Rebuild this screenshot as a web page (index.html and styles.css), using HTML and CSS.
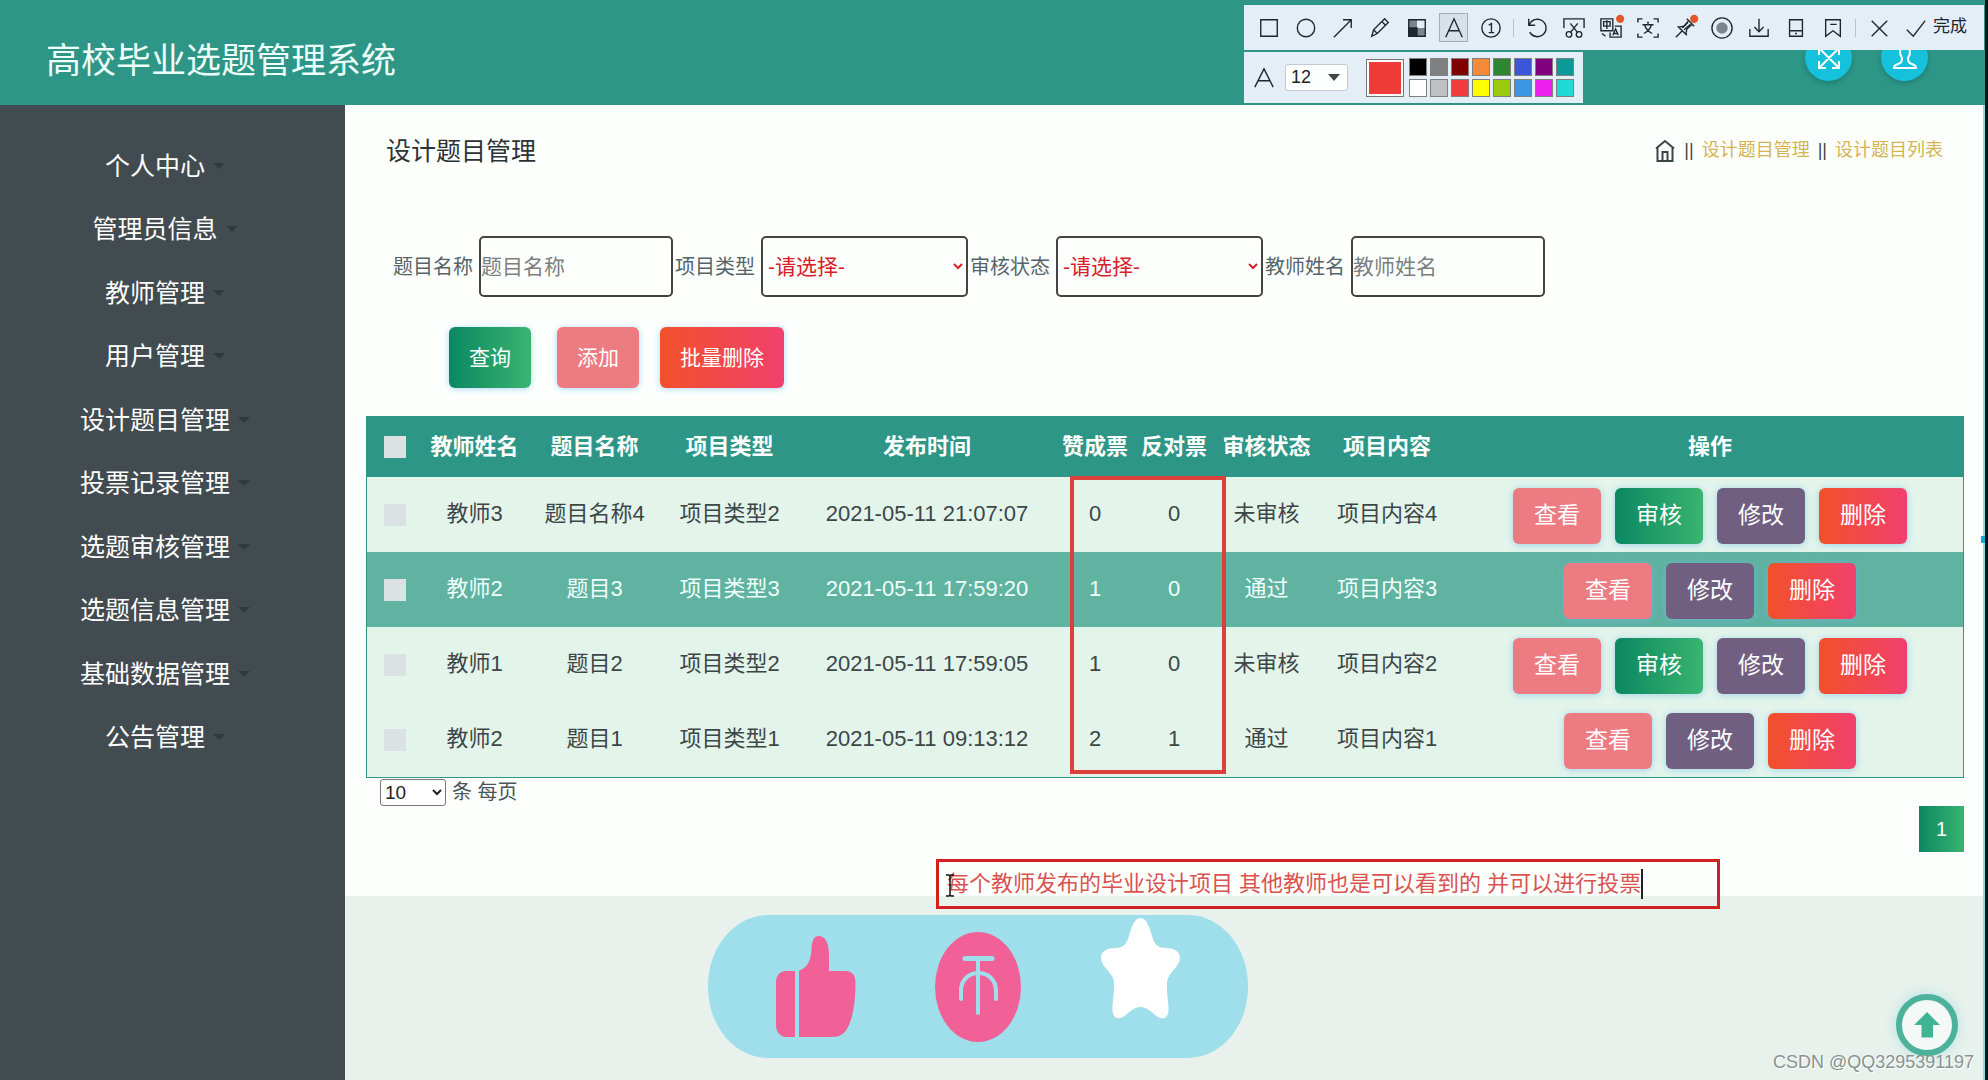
FILE: index.html
```html
<!DOCTYPE html>
<html lang="zh-CN">
<head>
<meta charset="utf-8">
<title>高校毕业选题管理系统</title>
<link rel="stylesheet" href="styles.css">
</head>
<body>
<header class="topbar">
  <h1 class="brand">高校毕业选题管理系统</h1>
  <div class="top-actions">
    <button class="round-btn" type="button" aria-label="全屏">
      <svg width="26" height="26" viewBox="0 0 26 26" fill="none" stroke="#fff" stroke-width="2"><path d="M4 4l18 18M22 4L4 22M3 10V3h7M16 3h7v7M23 16v7h-7M10 23H3v-7"/></svg>
    </button>
    <button class="round-btn" type="button" aria-label="用户">
      <svg width="26" height="26" viewBox="0 0 26 26" fill="none" stroke="#fff" stroke-width="2"><path d="M10 13C7 9 7 2 13 2s6 7 3 11c0 4 1 5 4 6 3 1 4 2 4 4H2c0-2 1-3 4-4 3-1 4-2 4-6z"/></svg>
    </button>
  </div>
</header>

<div class="layout">
  <nav class="sidebar">
    <ul class="menu">
      <li><a href="#">个人中心</a></li>
      <li><a href="#">管理员信息</a></li>
      <li><a href="#">教师管理</a></li>
      <li><a href="#">用户管理</a></li>
      <li><a href="#">设计题目管理</a></li>
      <li><a href="#">投票记录管理</a></li>
      <li><a href="#">选题审核管理</a></li>
      <li><a href="#">选题信息管理</a></li>
      <li><a href="#">基础数据管理</a></li>
      <li><a href="#">公告管理</a></li>
    </ul>
  </nav>

  <main class="main">
    <section class="panel">
      <div class="panel-head">
        <h2 class="page-title">设计题目管理</h2>
        <div class="crumbs">
          <svg width="22" height="24" viewBox="0 0 22 24" fill="none" stroke="#3a4548" stroke-width="2"><path d="M2 9.500L11 2l9 7.500M3.500 9v13h15V9M8.500 22v-9h5v9"/></svg>
          <span>||</span><a href="#">设计题目管理</a><span>||</span><a href="#">设计题目列表</a>
        </div>
      </div>

      <form class="search">
        <label for="topic">题目名称</label>
        <input id="topic" type="text" placeholder="题目名称">
        <label for="kind">项目类型</label>
        <select id="kind"><option>-请选择-</option></select>
        <label for="state">审核状态</label>
        <select id="state"><option>-请选择-</option></select>
        <label for="teacher">教师姓名</label>
        <input id="teacher" type="text" placeholder="教师姓名">
      </form>

      <div class="actions">
        <button class="btn green" type="button">查询</button>
        <button class="btn pink" type="button">添加</button>
        <button class="btn red" type="button">批量删除</button>
      </div>

      <table class="grid">
        <colgroup>
          <col class="c-check"><col class="c-teacher"><col class="c-topic"><col class="c-kind"><col class="c-time"><col class="c-yes"><col class="c-no"><col class="c-state"><col class="c-content"><col>
        </colgroup>
        <thead>
          <tr><th><input type="checkbox" aria-label="全选"></th><th>教师姓名</th><th>题目名称</th><th>项目类型</th><th>发布时间</th><th>赞成票</th><th>反对票</th><th>审核状态</th><th>项目内容</th><th>操作</th></tr>
        </thead>
        <tbody>
          <tr><td><input type="checkbox" aria-label="选择"></td><td>教师3</td><td>题目名称4</td><td>项目类型2</td><td>2021-05-11 21:07:07</td><td>0</td><td>0</td><td>未审核</td><td>项目内容4</td>
            <td><div class="ops"><button class="op pink" type="button">查看</button><button class="op green" type="button">审核</button><button class="op purple" type="button">修改</button><button class="op red" type="button">删除</button></div></td></tr>
          <tr class="active"><td><input type="checkbox" aria-label="选择"></td><td>教师2</td><td>题目3</td><td>项目类型3</td><td>2021-05-11 17:59:20</td><td>1</td><td>0</td><td>通过</td><td>项目内容3</td>
            <td><div class="ops"><button class="op pink" type="button">查看</button><button class="op purple" type="button">修改</button><button class="op red" type="button">删除</button></div></td></tr>
          <tr><td><input type="checkbox" aria-label="选择"></td><td>教师1</td><td>题目2</td><td>项目类型2</td><td>2021-05-11 17:59:05</td><td>1</td><td>0</td><td>未审核</td><td>项目内容2</td>
            <td><div class="ops"><button class="op pink" type="button">查看</button><button class="op green" type="button">审核</button><button class="op purple" type="button">修改</button><button class="op red" type="button">删除</button></div></td></tr>
          <tr><td><input type="checkbox" aria-label="选择"></td><td>教师2</td><td>题目1</td><td>项目类型1</td><td>2021-05-11 09:13:12</td><td>2</td><td>1</td><td>通过</td><td>项目内容1</td>
            <td><div class="ops"><button class="op pink" type="button">查看</button><button class="op purple" type="button">修改</button><button class="op red" type="button">删除</button></div></td></tr>
        </tbody>
      </table>

      <div class="page-size">
        <select id="size"><option>10</option></select>
        <label for="size">条 每页</label>
      </div>
      <div class="pager"><button class="page green" type="button">1</button></div>
    </section>

    <section class="feedback">
      <svg width="540" height="143" viewBox="0 0 540 143" role="img" aria-label="点赞 投币 收藏">
        <rect width="540" height="143" rx="60" ry="71" fill="#9fdfec"/>
        <g fill="#f16198">
          <path d="M87 56v66H77c-6-1-9-6-9-12V67c0-6 3-10 9-11z"/>
          <path d="M91 56c9-4 12-11 12.500-22C104 25 106 21 111 21c6 0 10 7 10 19v16h17c6 0 9.500 4 9.500 11 0 20-2.500 34-6.500 43-4 9-9 12-17 12H91z"/>
          <ellipse cx="270" cy="72" rx="43" ry="55"/>
        </g>
        <g fill="none" stroke="#9fdfec" stroke-width="4" stroke-linecap="round">
          <path d="M257 43.500h27" stroke-width="5"/>
          <path d="M270 44v54M253 84v-8c0-24 35-24 35 0v8"/>
        </g>
        <path fill="#fff" d="M432.500 3c6 0 9 9 11.500 18 2 8 6 12 13 12 9 0 15 3 15 10s-8 12-12 20c-3 8 1 24 .5 33-1 8-6 9-12 5-6-5-10-9-16-9s-10 4-16 9c-6 4-11 3-12-5-.5-9 3.500-25 .5-33-4-8-12-13-12-20s6-10 15-10c7 0 11-4 13-12 2.500-9 5.500-18 11.500-18z"/>
      </svg>
    </section>

    <div class="mark-votes"></div>
    <div class="mark-note">
      <span class="note-text">每个教师发布的毕业设计项目 其他教师也是可以看到的 并可以进行投票</span>
      <svg class="ibeam" width="10" height="23" viewBox="0 0 10 23" fill="none" stroke="#111" stroke-width="1.500"><path d="M1 1h3l1 1 1-1h3M5 2v19M1 22h3l1-1 1 1h3"/></svg>
    </div>
    <button class="to-top" type="button" aria-label="返回顶部">
      <svg width="28" height="28" viewBox="0 0 28 28" fill="#3fb495"><path d="M14 1l13 13h-7v12.500H8.500V14H1z"/></svg>
    </button>
    <div class="watermark">CSDN @QQ3295391197</div>
    <div class="edge-handle"></div>
  </main>
</div>

<div class="capture">
  <div class="tools">
    <button type="button" aria-label="矩形"><svg viewBox="0 0 24 24"><path d="M3 3h18v18H3z"/></svg></button>
    <button type="button" aria-label="椭圆"><svg viewBox="0 0 24 24"><circle cx="12" cy="12" r="9.500"/></svg></button>
    <button type="button" aria-label="箭头"><svg viewBox="0 0 24 24"><path d="M2 22L21 3M12 3h9v9"/></svg></button>
    <button type="button" aria-label="画笔"><svg viewBox="0 0 24 24"><path d="M3 21l2-7L17 2l4 4L9 18zM14 5l4 4M5 14l4 4"/></svg></button>
    <button type="button" aria-label="马赛克"><svg viewBox="0 0 24 24"><path d="M3 3h9v9H3zM12 12h9v9h-9z" fill="#7d858c" stroke="none"/><path d="M3 12h9v9H3z" fill="#1e2730"/><path d="M3 3h18v18H3z"/></svg></button>
    <button class="on" type="button" aria-label="文字"><svg viewBox="0 0 24 24"><path d="M3 22L12 2l9 20M6 15h12"/></svg></button>
    <button type="button" aria-label="序号"><svg viewBox="0 0 24 24"><circle cx="12" cy="12" r="10"/><path d="M9.500 9l3-2v10M9.500 17h6"/></svg></button>
    <i class="sep"></i>
    <button type="button" aria-label="撤销"><svg viewBox="0 0 24 24"><path d="M3 2v7h7M3.500 8.500A9.500 9.500 0 1 1 4 16.500"/></svg></button>
    <button type="button" aria-label="裁剪"><svg viewBox="0 0 24 24"><path d="M1 12V2h22v10M8 7l8 10M16 7L8 17"/><circle cx="6.500" cy="19" r="3"/><circle cx="17.500" cy="19" r="3"/></svg></button>
    <button type="button" aria-label="翻译"><svg viewBox="0 0 24 24"><path d="M1 2h13v13H1zM4 5h7v5H4zM7.500 3.500V13M16 10h7v12H11v-5M14 20l3-7 3 7M15 18h4M2 18l4 3"/><circle cx="22" cy="2" r="4.500" class="dot"/></svg></button>
    <button type="button" aria-label="识别文字"><svg viewBox="0 0 24 24"><path d="M1 6V2h5M18 2h5v4M23 18v4h-5M6 22H1v-4M12 5v3M6 8.500h12M8.500 9c1 4 4 7 8 9M15.500 9c-1 4-4 7-8 9"/></svg></button>
    <button type="button" aria-label="钉住"><svg viewBox="0 0 24 24"><path d="M2 22l7-7M4 10l10 10M5 11l6-1 5-6M13 19l1-6 6-5M14 2l8 8"/><path d="M9 12l6-6M11 14l7-6" /><circle cx="22" cy="2" r="4.500" class="dot"/></svg></button>
    <button type="button" aria-label="录制"><svg viewBox="0 0 24 24"><circle cx="12" cy="12" r="11"/><circle cx="12" cy="12" r="5.500" fill="#7d858c" stroke="#7d858c"/></svg></button>
    <button type="button" aria-label="下载"><svg viewBox="0 0 24 24"><path d="M12 2v14M7 11l5 5 5-5M2 13v8h20v-8"/></svg></button>
    <button type="button" aria-label="发送到手机"><svg viewBox="0 0 24 24"><path d="M5 3h14v18H5zM5 15h14M11 18h2"/></svg></button>
    <button type="button" aria-label="收藏"><svg viewBox="0 0 24 24"><path d="M4 3h16v18l-8-6-8 6zM9 8h7"/></svg></button>
    <i class="sep"></i>
    <button type="button" aria-label="关闭"><svg viewBox="0 0 24 24"><path d="M4 4l17 17M21 4L4 21"/></svg></button>
    <button class="done" type="button"><svg viewBox="0 0 24 24"><path d="M2 14l7 7L22 4"/></svg>完成</button>
  </div>
  <div class="options">
    <svg viewBox="0 0 24 24"><path d="M2 22L12 2l10 20M6 15h12"/></svg>
    <span class="font-size"><select aria-label="字号"><option>12</option></select><svg viewBox="0 0 12 8"><path d="M0 0h12L6 7z"/></svg></span>
    <button class="current" type="button" aria-label="当前颜色"></button>
    <div class="palette">
      <button class="k1" type="button" aria-label="黑"></button><button class="k2" type="button" aria-label="灰"></button><button class="k3" type="button" aria-label="深红"></button><button class="k4" type="button" aria-label="橙"></button><button class="k5" type="button" aria-label="绿"></button><button class="k6" type="button" aria-label="蓝"></button><button class="k7" type="button" aria-label="紫"></button><button class="k8" type="button" aria-label="青"></button>
      <button class="k9" type="button" aria-label="白"></button><button class="k10" type="button" aria-label="浅灰"></button><button class="k11" type="button" aria-label="红"></button><button class="k12" type="button" aria-label="黄"></button><button class="k13" type="button" aria-label="黄绿"></button><button class="k14" type="button" aria-label="天蓝"></button><button class="k15" type="button" aria-label="洋红"></button><button class="k16" type="button" aria-label="浅青"></button>
    </div>
  </div>
</div>
</body>
</html>
```
FILE: styles.css
```css
* { box-sizing: border-box; }

body {
  margin: 0;
  min-height: 100vh;
  display: flex;
  flex-direction: column;
  position: relative;
  border-right: 3px solid #04121c;
  background: #e8f1ec;
  color: #4a5559;
  font-family: "Liberation Sans", "Noto Sans CJK SC", sans-serif;
  font-size: 20px;
  line-height: 1.2;
}

button, input, select { font-family: inherit; line-height: 1.2; margin: 0; }
button { border: 0; padding: 0; cursor: pointer; }
h1, h2, ul { margin: 0; padding: 0; font-weight: 400; }
a { text-decoration: none; }

/* header */
.topbar {
  height: 105px;
  padding: 0 57px 0 46px;
  display: flex;
  align-items: center;
  justify-content: space-between;
  background: #2d9686;
}
.brand { font-size: 35px; line-height: 50px; padding-top: 16px; color: #eefffb; }
.top-actions { display: flex; gap: 29px; padding-top: 10px; }
.round-btn {
  width: 47px;
  height: 47px;
  border-radius: 50%;
  display: grid;
  place-items: center;
  background: #16c1dc;
  box-shadow: 0 2px 5px rgba(0, 60, 60, .3);
}

/* sidebar */
.layout { flex: 1; display: flex; }
.sidebar { width: 345px; flex: none; background: #424b4f; padding: 29px 15px 0 0; }
.menu { list-style: none; display: grid; grid-auto-rows: 1fr; height: 635px; }
.menu a {
  height: 100%;
  display: flex;
  align-items: center;
  justify-content: center;
  gap: 8px;
  font-size: 25px;
  color: #fff;
}
.menu a::after {
  content: "";
  border: 6px solid transparent;
  border-top-color: #30393c;
  border-bottom: 0;
}

/* content */
.main { flex: 1; min-width: 0; position: relative; border-right: 2px solid #8fdde4; }
.panel { background: #fdfffd; padding: 26px 19px 44px 21px; }
.panel-head {
  height: 40px;
  margin: 0 21px 65px 20px;
  display: flex;
  align-items: center;
  justify-content: space-between;
}
.page-title { font-size: 25px; color: #2c3335; }
.crumbs { display: flex; align-items: center; gap: 8px; font-size: 18px; color: #3a4548; }
.crumbs a { color: #d3b352; }

.search { display: flex; align-items: center; padding-left: 25px; color: #56646a; }
.search label { flex: none; margin: 0 6px 0 2px; }
.search input, .search select {
  height: 61px;
  border: 2px solid #444;
  border-radius: 5px;
  background: #fdfffd;
  font-size: 21px;
}
.search input { width: 194px; padding: 0; }
.search input::placeholder { color: #7b7f80; }
.search select { width: 207px; padding: 0 1px; color: #d8202a; }

.actions { display: flex; margin: 30px 0 28px 83px; gap: 21px; }
.btn { height: 61px; padding: 0 20px; border-radius: 6px; font-size: 21px; color: #fff; }
.btn.green { margin-right: 5px; }
.btn, .op { box-shadow: 0 1px 7px rgba(110, 185, 235, .55); }
.green { background: linear-gradient(90deg, #0b8862, #39b470); }
.red { background: linear-gradient(90deg, #f2502a, #f2406e); }
.pink { background: #ec7b82; }
.purple { background: #705f80; }

/* table */
.grid {
  width: 100%;
  table-layout: fixed;
  border-collapse: separate;
  border-spacing: 0;
  border: 1px solid #2d9686;
  font-size: 22px;
  text-align: center;
  color: #3d4647;
  white-space: nowrap;
}
.c-check { width: 56px; }
.c-teacher { width: 103px; }
.c-topic { width: 137px; }
.c-kind { width: 133px; }
.c-time { width: 262px; }
.c-yes { width: 74px; }
.c-no { width: 84px; }
.c-state { width: 101px; }
.c-content { width: 140px; }
.grid th, .grid td { padding: 0; }
.grid th { height: 60px; background: #2d9686; color: #fff; font-weight: 700; }
.grid td { height: 75px; background: #e3f4eb; }
.grid .active td { background: #60b2a1; color: #effffa; }
.grid input {
  appearance: none;
  display: block;
  width: 22px;
  height: 22px;
  margin: 0 auto;
  background: #dbe2e3;
}
.ops { display: flex; justify-content: center; gap: 14px; padding-top: 2px; }
.op { width: 88px; height: 56px; border-radius: 6px; font-size: 23px; color: #fff; }

.page-size { display: flex; align-items: center; gap: 6px; height: 28px; padding-left: 14px; }
.page-size select {
  width: 66px;
  height: 27px;
  border: 1px solid #767676;
  border-radius: 3px;
  background: #fff;
  font-size: 19px;
  color: #222;
}
.pager { display: flex; justify-content: flex-end; }
.page { width: 45px; height: 46px; font-size: 20px; color: #fff; }

.feedback { padding: 19px 0 21px 363px; }
.feedback svg { display: block; }

/* annotations drawn over the page */
.mark-votes {
  position: absolute;
  left: 725px;
  top: 371px;
  width: 156px;
  height: 298px;
  border: 4px solid #dc403c;
}
.mark-note {
  position: absolute;
  left: 591px;
  top: 754px;
  width: 784px;
  height: 50px;
  padding-left: 8px;
  display: flex;
  align-items: center;
  border: 3px solid #d11f22;
}
.note-text {
  border-right: 2px solid #222;
  font-size: 22px;
  line-height: 30px;
  white-space: nowrap;
  color: #d9534f;
}
.ibeam { position: absolute; left: 6px; top: 12px; }
.to-top {
  position: absolute;
  right: 25px;
  bottom: 24px;
  width: 62px;
  height: 62px;
  border: 6px solid #4cb29c;
  border-radius: 50%;
  background: #f4f8f6;
  display: grid;
  place-items: center;
  box-shadow: 0 0 12px #aee2e4;
}
.watermark {
  position: absolute;
  right: 9px;
  bottom: 8px;
  font-size: 18px;
  line-height: 20px;
  color: #8a9390;
  text-shadow: 1px 1px 0 #fff;
}
.edge-handle { position: absolute; right: -2px; top: 431px; width: 4px; height: 7px; background: #1da5e0; }

/* screen capture toolbar */
.capture { position: absolute; right: 1px; top: 5px; width: 740px; }
.capture svg { width: 22px; height: 22px; flex: none; overflow: visible; fill: none; stroke: #1e2730; stroke-width: 1.5; }
.capture .dot { fill: #e4572a; stroke: none; }
.tools { display: flex; align-items: center; height: 45px; padding-left: 6px; background: #e4eef6; }
.tools button { width: 37px; height: 29px; display: grid; place-items: center; background: none; }
.tools .on { width: 29px; margin: 0 4px; border: 1px solid #a4adb4; background: #d8e1e8; }
.tools .done { display: flex; align-items: center; width: auto; padding-left: 8px; gap: 6px; font-size: 17px; color: #1e2730; }
.sep { width: 1px; height: 18px; margin: 0 4px; background: #b9c2ca; }
.options {
  display: flex;
  align-items: center;
  width: 339px;
  height: 51px;
  margin-top: 2px;
  padding-left: 9px;
  background: #e4eef6;
}
.font-size { position: relative; margin: 0 18px 0 10px; }
.font-size select {
  display: block;
  appearance: none;
  width: 63px;
  height: 27px;
  padding: 0 5px;
  border: 1px solid #c3cbd2;
  border-radius: 3px;
  background: #fdfffe;
  font-size: 18px;
  color: #222;
}
.capture .font-size svg { position: absolute; right: 8px; top: 10px; width: 12px; height: 8px; fill: #444; stroke: none; }
.current { width: 38px; height: 38px; border: 1px solid #777; background: #f03c38; box-shadow: inset 0 0 0 2px #fff; }
.palette { display: grid; grid-template-columns: repeat(8, 18px); gap: 3px; margin-left: 5px; }
.palette button { height: 18px; border: 1px solid #808080; }
.k1 { background: #000; }
.k2 { background: #808080; }
.k3 { background: #800000; }
.k4 { background: #f78a36; }
.k5 { background: #2f8632; }
.k6 { background: #3b56d8; }
.k7 { background: #800080; }
.k8 { background: #0b9a98; }
.k9 { background: #fff; }
.k10 { background: #c0c0c0; }
.k11 { background: #f03c3c; }
.k12 { background: #ff0; }
.k13 { background: #9acb0c; }
.k14 { background: #3c96e6; }
.k15 { background: #ee1fee; }
.k16 { background: #1fdad8; }
```
